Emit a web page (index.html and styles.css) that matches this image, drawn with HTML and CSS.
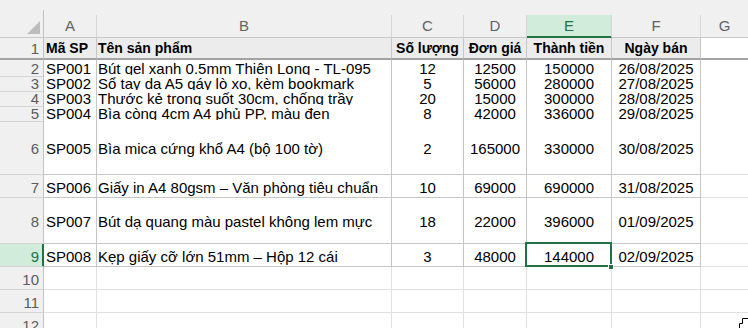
FILE: index.html
```html
<!DOCTYPE html>
<html lang="vi">
<head>
    <meta charset="UTF-8">
    <meta name="viewport" content="width=device-width, initial-scale=1.0">
    <title>Bán hàng văn phòng phẩm</title>
    <link rel="stylesheet" href="styles.css">
</head>
<body>
    <div class="sheet">
        <div class="row r-head">
            <div class="corner"><div class="corner-mark"></div></div>
            <div class="col">A</div>
            <div class="col">B</div>
            <div class="col">C</div>
            <div class="col">D</div>
            <div class="col active">E</div>
            <div class="col">F</div>
            <div class="col last">G</div>
        </div>

        <div class="row r-title">
            <div class="num">1</div>
            <div class="cell">Mã SP</div>
            <div class="cell name">Tên sản phẩm</div>
            <div class="cell mid">Số lượng</div>
            <div class="cell mid">Đơn giá</div>
            <div class="cell mid">Thành tiền</div>
            <div class="cell mid">Ngày bán</div>
            <div class="cell blank"></div>
        </div>

        <div class="row r-tight">
            <div class="num">2</div>
            <div class="cell">SP001</div>
            <div class="cell name">Bút gel xanh 0.5mm Thiên Long - TL-095</div>
            <div class="cell mid">12</div>
            <div class="cell mid">12500</div>
            <div class="cell mid">150000</div>
            <div class="cell mid">26/08/2025</div>
            <div class="cell blank"></div>
        </div>
        <div class="row r-tight">
            <div class="num">3</div>
            <div class="cell">SP002</div>
            <div class="cell name">Sổ tay da A5 gáy lò xo, kèm bookmark</div>
            <div class="cell mid">5</div>
            <div class="cell mid">56000</div>
            <div class="cell mid">280000</div>
            <div class="cell mid">27/08/2025</div>
            <div class="cell blank"></div>
        </div>
        <div class="row r-tight">
            <div class="num">4</div>
            <div class="cell">SP003</div>
            <div class="cell name">Thước kẻ trong suốt 30cm, chống trầy</div>
            <div class="cell mid">20</div>
            <div class="cell mid">15000</div>
            <div class="cell mid">300000</div>
            <div class="cell mid">28/08/2025</div>
            <div class="cell blank"></div>
        </div>
        <div class="row r-tight">
            <div class="num">5</div>
            <div class="cell">SP004</div>
            <div class="cell name">Bìa còng 4cm A4 phủ PP, màu đen</div>
            <div class="cell mid">8</div>
            <div class="cell mid">42000</div>
            <div class="cell mid">336000</div>
            <div class="cell mid">29/08/2025</div>
            <div class="cell blank"></div>
        </div>

        <div class="row r-55">
            <div class="num">6</div>
            <div class="cell">SP005</div>
            <div class="cell name">Bìa mica cứng khổ A4 (bộ 100 tờ)</div>
            <div class="cell mid">2</div>
            <div class="cell mid">165000</div>
            <div class="cell mid">330000</div>
            <div class="cell mid">30/08/2025</div>
            <div class="cell blank"></div>
        </div>
        <div class="row r-23">
            <div class="num">7</div>
            <div class="cell">SP006</div>
            <div class="cell name">Giấy in A4 80gsm – Văn phòng tiêu chuẩn</div>
            <div class="cell mid">10</div>
            <div class="cell mid">69000</div>
            <div class="cell mid">690000</div>
            <div class="cell mid">31/08/2025</div>
            <div class="cell blank"></div>
        </div>
        <div class="row r-46">
            <div class="num">8</div>
            <div class="cell">SP007</div>
            <div class="cell name">Bút dạ quang màu pastel không lem mực</div>
            <div class="cell mid">18</div>
            <div class="cell mid">22000</div>
            <div class="cell mid">396000</div>
            <div class="cell mid">01/09/2025</div>
            <div class="cell blank"></div>
        </div>
        <div class="row r-23">
            <div class="num active">9</div>
            <div class="cell">SP008</div>
            <div class="cell name">Kẹp giấy cỡ lớn 51mm – Hộp 12 cái</div>
            <div class="cell mid">3</div>
            <div class="cell mid">48000</div>
            <div class="cell mid selected">144000</div>
            <div class="cell mid">02/09/2025</div>
            <div class="cell blank"></div>
        </div>

        <div class="row r-23 empty">
            <div class="num">10</div>
            <div class="cell"></div><div class="cell"></div><div class="cell"></div>
            <div class="cell"></div><div class="cell"></div><div class="cell"></div>
            <div class="cell blank"></div>
        </div>
        <div class="row r-23 empty">
            <div class="num">11</div>
            <div class="cell"></div><div class="cell"></div><div class="cell"></div>
            <div class="cell"></div><div class="cell"></div><div class="cell"></div>
            <div class="cell blank"></div>
        </div>
        <div class="row r-23 empty">
            <div class="num">12</div>
            <div class="cell"></div><div class="cell"></div><div class="cell"></div>
            <div class="cell"></div><div class="cell"></div><div class="cell"></div>
            <div class="cell blank"></div>
        </div>
    </div>

    <!-- mouse pointer (white cross) -->
    <svg class="pointer" width="10" height="11" viewBox="0 0 10 11">
        <path d="M0.5 11 V5.5 H3.5 V0.5 H10" fill="#fff" stroke="#000" stroke-width="1"/>
    </svg>
</body>
</html>
```

FILE: styles.css
```css
body {
    margin: 0;
    padding-top: 10px;
    background-color: #f0f0f0;
    font-family: "Liberation Sans", Arial, sans-serif;
    font-size: 15px;
    color: #000;
    overflow: hidden;
}

.row {
    display: grid;
    grid-template-columns: 44px 53px 295px 72px 63px 85px 89px 1fr;
}

.r-head { height: 28px; }
.r-title { height: 22px; }
.r-tight { height: 15px; }
.r-55 { height: 55px; }
.r-46 { height: 46px; }
.r-23 { height: 23px; }

/* column letters */
.corner {
    display: flex;
    justify-content: flex-end;
    align-items: flex-end;
    padding: 0 3px 3px 0;
    border-right: 1px solid #c2c2c2;
    border-bottom: 1px solid #c8c8c8;
}

.corner-mark {
    width: 13px;
    height: 13px;
    background-color: #bdbdbd;
    clip-path: polygon(100% 0, 100% 100%, 0 100%);
}

.col {
    align-self: end;
    height: 22px;
    line-height: 21px;
    text-align: center;
    color: #636363;
    border-right: 1px solid #d6d6d6;
    border-bottom: 1px solid #c8c8c8;
}

.col.last { border-right: none; }

.col.active {
    background-color: #d2ecdc;
    color: #217346;
    border-bottom-color: #217346;
    box-shadow: inset 0 -1px 0 #217346;
}

/* row numbers */
.num {
    display: flex;
    justify-content: flex-end;
    align-items: center;
    padding: 2px 4px 0 0;
    line-height: 17px;
    color: #5c5c5c;
    border-right: 1px solid #c2c2c2;
    border-bottom: 1px solid #d4d4d4;
}

.num.active {
    background-color: #d2ecdc;
    color: #217346;
    border-right-color: #217346;
    box-shadow: inset -1px 0 0 #217346;
}

/* cells */
.cell {
    display: flex;
    align-items: center;
    padding: 2px 2px 0;
    line-height: 17px;
    white-space: nowrap;
    overflow: hidden;
    background-color: #fff;
    border-right: 1px solid #c6c6c6;
    border-bottom: 1px solid #c6c6c6;
}

.cell.name { padding-left: 1px; }
.cell.mid { justify-content: center; padding: 2px 0 0; }

.cell.blank {
    border-right: none;
    border-bottom-color: #e1e1e1;
}

.empty .cell { border-color: #e1e1e1; }

/* header row with the frozen pane line under it */
.r-title .cell,
.r-title .num {
    align-items: flex-start;
    padding-top: 1px;
    line-height: 19px;
    border-bottom: 2px solid #a3a3a3;
}

.r-title .cell {
    background-color: #ececec;
    font-size: 14px;
    font-weight: bold;
}

.r-title .cell.blank { background-color: #fff; }

/* rows too short for the text */
.r-tight .cell,
.r-tight .num {
    align-items: flex-start;
    padding-top: 1px;
    line-height: 15px;
}

/* active cell */
.cell.selected {
    position: relative;
    overflow: visible;
}

.cell.selected::before {
    content: "";
    position: absolute;
    top: -2px;
    left: -2px;
    right: -1px;
    bottom: -1px;
    border: 2px solid #217346;
}

.cell.selected::after {
    content: "";
    position: absolute;
    right: -3px;
    bottom: -4px;
    width: 4px;
    height: 4px;
    background-color: #217346;
    border: 1px solid #fff;
}

.pointer {
    position: absolute;
    left: 739px;
    top: 318px;
}
```
